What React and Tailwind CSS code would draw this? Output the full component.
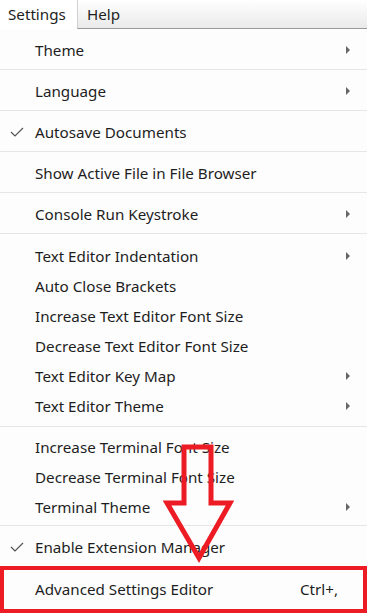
import React from "react";

const groups = [
  { pad: "py-[5px]", items: [{ label: "Theme", sub: true }] },
  { pad: "py-[5px]", items: [{ label: "Language", sub: true }] },
  { pad: "py-[5px]", items: [{ label: "Autosave Documents", check: true }] },
  { pad: "py-[5px]", items: [{ label: "Show Active File in File Browser" }] },
  { pad: "py-[5px]", items: [{ label: "Console Run Keystroke", sub: true }] },
  {
    pad: "py-[6px]",
    items: [
      { label: "Text Editor Indentation", sub: true },
      { label: "Auto Close Brackets" },
      { label: "Increase Text Editor Font Size" },
      { label: "Decrease Text Editor Font Size" },
      { label: "Text Editor Key Map", sub: true },
      { label: "Text Editor Theme", sub: true },
    ],
  },
  {
    pad: "py-[4px]",
    items: [
      { label: "Increase Terminal Font Size" },
      { label: "Decrease Terminal Font Size" },
      { label: "Terminal Theme", sub: true },
    ],
  },
  { pad: "py-[5px]", items: [{ label: "Enable Extension Manager", check: true }] },
  { pad: "py-[6px]", items: [{ label: "Advanced Settings Editor", shortcut: "Ctrl+," }] },
];

function Check() {
  return (
    <svg width="14" height="10" viewBox="0 0 14 10" className="absolute left-[10px] top-[11px]">
      <path d="M1 5 L5 9 L13 1" fill="none" stroke="#555" strokeWidth="1.2" />
    </svg>
  );
}

function Row({ item }) {
  return (
    <div className="relative h-[30px] flex items-center pt-[2px] pl-[35px] pr-[17px]">
      {item.check && <Check />}
      <span className="flex-1">{item.label}</span>
      {item.sub && (
        <svg width="4" height="8" viewBox="0 0 4 8">
          <path d="M0 0 L4 4 L0 8 Z" fill="#666" />
        </svg>
      )}
      {item.shortcut && <span className="pr-[12px]">{item.shortcut}</span>}
    </div>
  );
}

export default function App() {
  return (
    <div
      className="relative w-[367px] h-[613px] overflow-hidden bg-white text-[15.2px] text-[#1e1e1e]"
      style={{ fontFamily: '"Noto Sans", "Open Sans", sans-serif' }}
    >
      {/* menu bar */}
      <div className="flex h-[29px]">
        <div className="w-[77px] bg-white flex items-center pl-[8px]">Settings</div>
        <div className="flex-1 flex items-center pl-[9px] border-l border-[#d0d0d0] border-b border-b-[#9a9a9a] bg-gradient-to-b from-[#ffffff] to-[#eaeaea]">
          Help
        </div>
      </div>

      {/* dropdown */}
      <div className="bg-[#fdfdfd] border-b border-[#c8c8c8]">
        {groups.map((g, i) => (
          <div key={i} className={`${g.pad} ${i > 0 ? "border-t border-[#e6e6e6]" : ""}`}>
            {g.items.map((item) => (
              <Row key={item.label} item={item} />
            ))}
          </div>
        ))}
      </div>

      {/* annotation: arrow */}
      <svg className="absolute left-0 top-0" width="367" height="613" viewBox="0 0 367 613">
        <path
          d="M184 447 L211 447 L211 503 L230 503 L199 558 L167 503 L184 503 Z"
          fill="none"
          stroke="#ed1c24"
          strokeWidth="5"
          strokeLinejoin="miter"
        />
      </svg>

      {/* annotation: highlight box */}
      <div className="absolute left-0 top-[566px] w-[367px] h-[47px] border-[4px] border-[#ed1c24]" />
    </div>
  );
}
